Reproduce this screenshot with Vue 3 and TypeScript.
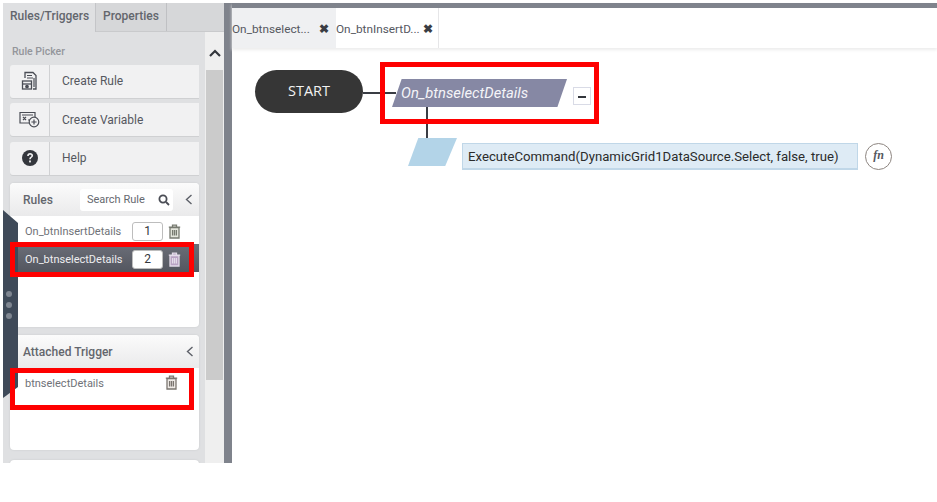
<script setup lang="ts">
const rules = [
  { name: 'On_btnInsertDetails', order: 1, active: false },
  { name: 'On_btnselectDetails', order: 2, active: true },
]
</script>

<template>
  <div class="page">
    <div class="frame">
      <aside class="side">
        <div class="tabs">
          <div class="tab on">Rules/Triggers</div>
          <div class="tab">Properties</div>
        </div>
        <div class="side-body">
          <div class="col">
            <div class="picker-label">Rule Picker</div>
            <div class="pick">
              <span class="pick-ic">
                <svg width="18" height="20" viewBox="0 0 18 20" fill="none" stroke="#4a4d55" stroke-width="1.3">
                  <path d="M4 7V1.500h8l3 3V18h-3" />
                  <path d="M6 4.500h5M6 7h6M13 7v9" stroke-width="1.200" />
                  <rect x="1.500" y="10" width="9" height="8" />
                  <path d="M1.500 13h9" />
                  <circle cx="6" cy="15.500" r="1.200" fill="#4a4d55" />
                </svg>
              </span>
              <span class="pick-tx">Create Rule</span>
            </div>
            <div class="pick">
              <span class="pick-ic">
                <svg width="21" height="17" viewBox="0 0 21 17" fill="none" stroke="#4a4d55" stroke-width="1.200">
                  <path d="M11 12H1V1.500h15V6" />
                  <path d="M3 4h11M4 6l3 3M7 6l-3 3M9 9h2" />
                  <circle cx="15" cy="11" r="4.800" fill="#f1f1f2" />
                  <path d="M15 8.400v5.200M12.400 11h5.200" />
                </svg>
              </span>
              <span class="pick-tx">Create Variable</span>
            </div>
            <div class="pick">
              <span class="pick-ic">
                <svg width="18" height="18" viewBox="0 0 18 18">
                  <circle cx="9" cy="9" r="8" fill="#34373d" />
                  <path d="M6.100 7c0-1.900 1.300-2.900 3-2.900s3 1 3 2.500c0 2-2.300 2-2.300 3.600H8.200c0-2.400 2.200-2.500 2.200-3.500 0-.6-.5-1-1.300-1S7.800 6.200 7.800 7z" fill="#f1f1f2" />
                  <rect x="8.100" y="11.500" width="1.800" height="1.900" fill="#f1f1f2" />
                </svg>
              </span>
              <span class="pick-tx">Help</span>
            </div>

            <section class="card rules-card">
              <header class="card-head">
                <span class="card-title">Rules</span>
                <div class="search">
                  <span>Search Rule</span>
                  <svg width="12" height="12" viewBox="0 0 12 12" fill="none" stroke="#4a4d55" stroke-width="1.800">
                    <circle cx="5" cy="5" r="3.600" />
                    <path d="M8 8l3 3" />
                  </svg>
                </div>
                <svg class="chev" width="8" height="11" viewBox="0 0 8 11" fill="none" stroke="#5d6068" stroke-width="1.400">
                  <path d="M6.500 1L1.500 5.500l5 4.500" />
                </svg>
              </header>
              <div class="rule-list">
                <div v-for="r in rules" :key="r.name" class="rule" :class="{ active: r.active }">
                  <span class="rule-name">{{ r.name }}</span>
                  <span class="order">{{ r.order }}</span>
                  <svg class="bin" width="13" height="15" viewBox="0 0 13 15" :fill="r.active ? '#b9a3c4' : '#e4e6dc'" :stroke="r.active ? '#e4dcea' : '#777a70'" stroke-width="1.300">
                    <path d="M2 3.500h9V14H2zM.8 3.200h11.400M4.500 3V1.200h4V3" />
                    <path d="M4.600 6v5.500M6.500 6v5.500M8.400 6v5.500" fill="none" />
                  </svg>
                </div>
              </div>
            </section>

            <section class="card trigger-card">
              <header class="card-head">
                <span class="card-title">Attached Trigger</span>
                <svg class="chev end" width="8" height="11" viewBox="0 0 8 11" fill="none" stroke="#5d6068" stroke-width="1.400">
                  <path d="M6.500 1L1.500 5.500l5 4.500" />
                </svg>
              </header>
              <div class="trigger">
                <span>btnselectDetails</span>
                <svg width="13" height="15" viewBox="0 0 13 15" fill="#eeeae6" stroke="#7a7570" stroke-width="1.300">
                  <path d="M2 3.500h9V14H2zM.8 3.200h11.400M4.500 3V1.200h4V3" />
                  <path d="M4.600 6v5.500M6.500 6v5.500M8.400 6v5.500" fill="none" />
                </svg>
              </div>
            </section>
            <div class="card stub"></div>
          </div>
          <div class="scroll">
            <div class="scroll-up">
              <svg width="12" height="8" viewBox="0 0 12 8" fill="none" stroke="#33363c" stroke-width="2.200">
                <path d="M1 7l5-5 5 5" />
              </svg>
            </div>
            <div class="thumb"></div>
          </div>
        </div>

        <div class="handle">
          <i></i><i></i><i></i>
        </div>
      </aside>

      <div class="divider"></div>

      <main class="main">
        <div class="doc-tabs">
          <div class="doc-tab off"><span>On_btnselect...</span><b>✖</b></div>
          <div class="doc-tab"><span>On_btnInsertD...</span><b>✖</b></div>
        </div>
        <div class="canvas">
          <div class="start">START</div>
          <div class="wire h"></div>
          <div class="wire v"></div>
          <div class="event"><span>On_btnselectDetails</span></div>
          <div class="collapse"></div>
          <div class="action"></div>
          <div class="expr">ExecuteCommand(DynamicGrid1DataSource.Select, false, true)</div>
          <div class="fn">fn</div>
        </div>
      </main>
    </div>

    <div class="mark m1"></div>
    <div class="mark m2"></div>
    <div class="mark m3"></div>
  </div>
</template>

<style scoped>
.page {
  position: relative;
  width: 937px;
  height: 502px;
  background: #fff;
  overflow: hidden;
  font-family: Roboto, "Liberation Sans", sans-serif;
}
.frame {
  display: flex;
  height: 460px;
  margin: 3px 0 0 3px;
}
.side {
  position: relative;
  width: 221px;
  flex: none;
  background: #dfe0e2;
  display: flex;
  flex-direction: column;
}
.tabs {
  display: flex;
  height: 29px;
  flex: none;
  background: #d6d7d9;
  border-bottom: 1px solid #c9cacc;
  box-sizing: border-box;
}
.tab {
  padding: 0 7px;
  line-height: 26px;
  font-size: 12px;
  font-weight: 500;
  color: #63666d;
  border-right: 1px solid #bfc0c3;
}
.tab.on {
  background: #dfe0e2;
  height: 29px;
  width: 93px;
  padding: 0 0 0 7px;
  box-sizing: border-box;
  border-right: 1px solid #c4c5c8;
}
.side-body {
  flex: 1;
  display: flex;
  min-height: 0;
}
.col {
  width: 202px;
  flex: none;
  overflow: hidden;
  padding: 13px 6px 0 7px;
  box-sizing: border-box;
}
.picker-label {
  font-size: 10.500px;
  font-weight: 500;
  line-height: 13px;
  color: #94969b;
  margin: 0 0 6.500px 2px;
  height: 13px;
}
.pick {
  display: flex;
  align-items: center;
  height: 33px;
  margin-bottom: 5.500px;
  background: #f1f1f2;
  border-radius: 3px 0 0 3px;
  box-shadow: 0 1px 0 #cfd0d2;
}
.pick-ic {
  width: 39px;
  height: 100%;
  flex: none;
  display: flex;
  align-items: center;
  justify-content: center;
  border-right: 1px solid #d0d1d3;
}
.pick-tx {
  padding-left: 12px;
  font-size: 12px;
  color: #55585f;
}
.card {
  width: 189px;
  background: #fff;
  border-radius: 4px;
  box-shadow: 0 0 2px #c6c7ca;
  overflow: hidden;
}
.rules-card {
  height: 144px;
  margin-top: 8.500px;
}
.trigger-card {
  height: 115px;
  margin-top: 8px;
}
.stub {
  height: 30px;
  margin-top: 10px;
}
.card-head {
  display: flex;
  align-items: center;
  height: 33px;
  background: linear-gradient(#fbfbfb, #eaeaeb);
  padding-left: 13px;
  box-sizing: border-box;
}
.card-title {
  font-size: 12px;
  font-weight: 500;
  color: #63666d;
}
.search {
  display: flex;
  align-items: center;
  justify-content: space-between;
  width: 93px;
  height: 22px;
  margin-left: 27px;
  padding: 0 3px 0 7px;
  box-sizing: border-box;
  background: #fff;
  border-radius: 3px;
  font-size: 11px;
  color: #66696f;
}
.chev {
  margin-left: 12px;
}
.chev.end {
  margin-left: auto;
  margin-right: 5px;
}
.rule {
  display: flex;
  align-items: center;
  height: 28px;
  padding: 2px 0 0 15px;
  box-sizing: border-box;
  font-size: 11px;
  color: #6f7278;
}
.rule.active {
  background: linear-gradient(#6b6e78, #53565f);
  color: #eeeef0;
}
.rule-name {
  width: 107px;
  flex: none;
  white-space: nowrap;
}
.order {
  width: 31px;
  height: 19px;
  flex: none;
  box-sizing: border-box;
  background: #fff;
  border: 1px solid #bdbdbd;
  border-radius: 3px;
  text-align: center;
  line-height: 17px;
  font-size: 12px;
  color: #33363c;
}
.bin {
  margin-left: 5px;
}
.trigger {
  display: flex;
  align-items: flex-start;
  justify-content: space-between;
  padding: 9px 21px 0 15px;
  font-size: 11px;
  color: #6f7278;
}
.trigger svg {
  margin-top: -2px;
}
.scroll {
  width: 19px;
  flex: none;
  background: #efefef;
}
.scroll-up {
  height: 38px;
  display: flex;
  align-items: center;
  justify-content: center;
  padding-top: 3px;
  box-sizing: border-box;
}
.thumb {
  width: 17px;
  height: 310px;
  margin-left: 1px;
  background: #cbcbcb;
}
.handle {
  position: absolute;
  left: 0;
  top: 207px;
  width: 15px;
  height: 188px;
  background: #3f4a59;
  clip-path: polygon(0 0, 100% 13px, 100% 177px, 0 100%);
  display: flex;
  flex-direction: column;
  align-items: center;
  padding: 81px 3px 0 0;
  box-sizing: border-box;
  gap: 5px;
}
.handle i {
  width: 6px;
  height: 6px;
  border-radius: 50%;
  background: #7f8691;
}
.divider {
  width: 8px;
  flex: none;
  background: #7f838c;
}
.main {
  flex: 1;
  min-width: 0;
  display: flex;
  flex-direction: column;
}
.doc-tabs {
  display: flex;
  height: 45px;
  flex: none;
  border-top: 5px solid #7f838c;
  box-sizing: border-box;
  box-shadow: 0 2px 3px #ececec;
  background: #fff;
}
.doc-tab {
  width: 103px;
  display: flex;
  align-items: center;
  padding-top: 2px;
  font-size: 11.800px;
  color: #55585f;
  box-sizing: border-box;
  border-right: 1px solid #e6e6e8;
}
.doc-tab.off {
  width: 104px;
  background: #eff0f2;
  border-right: none;
}
.doc-tab span {
  flex: 1;
  white-space: nowrap;
}
.doc-tab b {
  font-size: 12px;
  color: #3a3d44;
  width: 12px;
  margin-right: 3px;
}
.doc-tab.off b {
  margin-right: 5px;
}
.canvas {
  position: relative;
  flex: 1;
}
.start {
  position: absolute;
  left: 23px;
  top: 22px;
  width: 108px;
  height: 43px;
  border-radius: 22px;
  background: #363636;
  color: #f2f2f2;
  font-family: "Open Sans", sans-serif;
  font-size: 14.500px;
  line-height: 41px;
  text-align: center;
}
.wire {
  position: absolute;
  background: #3a3d44;
}
.wire.h {
  left: 131px;
  top: 44px;
  width: 33px;
  height: 2px;
}
.wire.v {
  left: 194px;
  top: 59px;
  width: 2px;
  height: 32px;
}
.event {
  position: absolute;
  left: 160px;
  top: 31px;
  width: 175px;
  height: 28px;
  background: #8688a4;
  clip-path: polygon(5.500% 0, 100% 0, 94.500% 100%, 0 100%);
  color: #f4f4f8;
  font-size: 14.800px;
  font-style: italic;
  line-height: 28px;
  padding-left: 9px;
  box-sizing: border-box;
}
.collapse {
  position: absolute;
  left: 341px;
  top: 39px;
  width: 18px;
  height: 18px;
  box-sizing: border-box;
  border: 1px solid #d9dbe6;
  background: #fff;
}
.collapse::after {
  content: "";
  position: absolute;
  left: 4px;
  top: 8px;
  width: 8px;
  height: 2px;
  background: #33363c;
}
.action {
  position: absolute;
  left: 176px;
  top: 90px;
  width: 49px;
  height: 28px;
  background: #b3d4e8;
  clip-path: polygon(21% 0, 100% 0, 76% 100%, 0 100%);
}
.expr {
  position: absolute;
  left: 230px;
  top: 95px;
  width: 396px;
  height: 27px;
  box-sizing: border-box;
  background: #deebf5;
  border: 1px solid #c0d7e8;
  border-bottom-width: 2px;
  font-size: 13.200px;
  line-height: 25px;
  padding-left: 5px;
  color: #2b2b2b;
  white-space: nowrap;
}
.fn {
  position: absolute;
  left: 633px;
  top: 95px;
  width: 27px;
  height: 27px;
  box-sizing: border-box;
  border: 1.500px solid #8d8580;
  border-radius: 50%;
  background: #fff;
  font-family: "Liberation Serif", serif;
  font-style: italic;
  font-weight: 700;
  font-size: 12px;
  line-height: 23px;
  text-align: center;
  color: #55585f;
}
.mark {
  position: absolute;
  box-sizing: border-box;
  border: 5px solid #fe0000;
  pointer-events: none;
}
.m1 {
  left: 10px;
  top: 242px;
  width: 184px;
  height: 35px;
}
.m2 {
  left: 10px;
  top: 368px;
  width: 184px;
  height: 42px;
}
.m3 {
  left: 380px;
  top: 62px;
  width: 219px;
  height: 62px;
}
</style>
